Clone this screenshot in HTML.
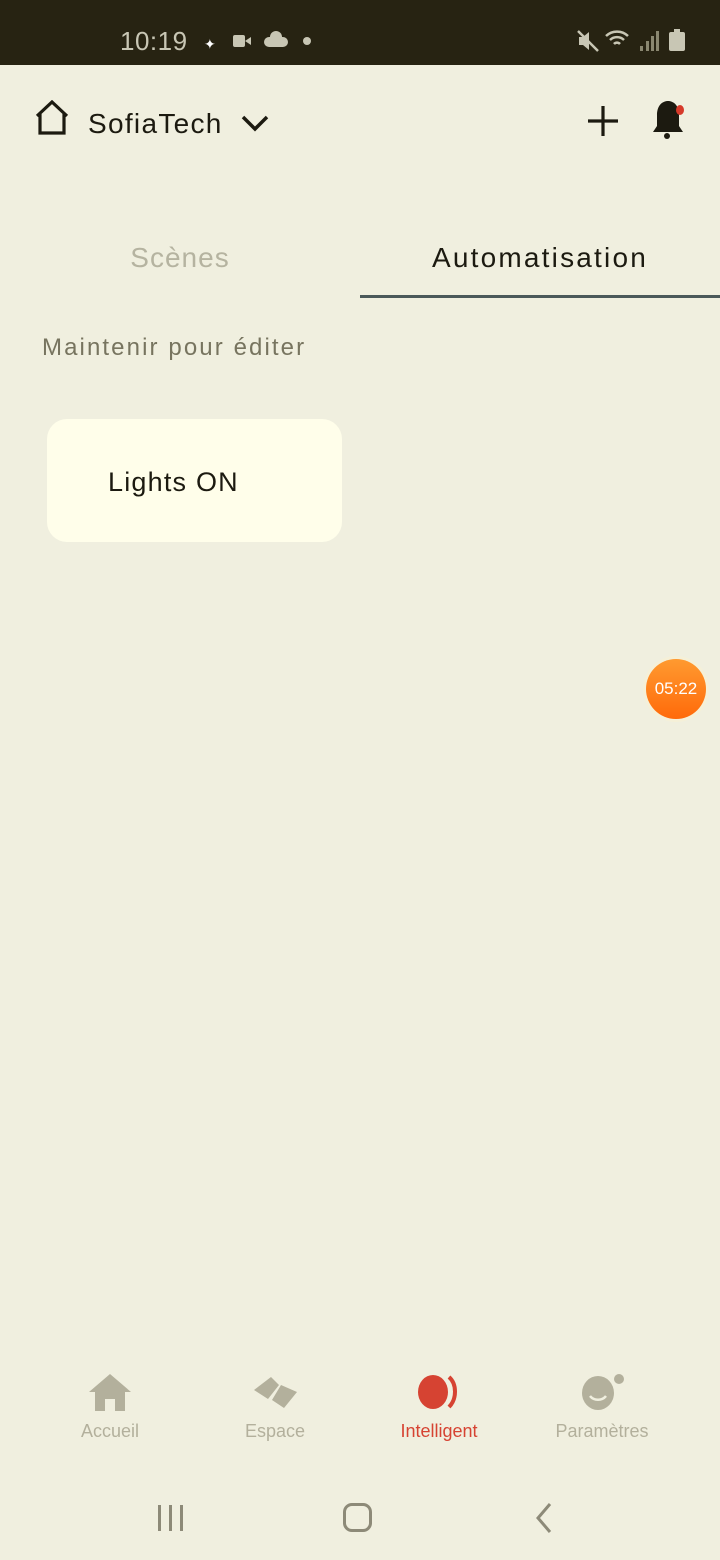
<!DOCTYPE html>
<html><head><meta charset="utf-8"><style>
*{margin:0;padding:0;box-sizing:border-box}
body{width:720px;height:1560px;background:#f0efdf;font-family:"Liberation Sans","DejaVu Sans",sans-serif;position:relative;overflow:hidden;color:#1c1a10}
.abs{position:absolute}
.sb{top:0;left:0;width:720px;height:65px;background:#272312;color:#c8c6b4}
.time{left:120px;top:26px;font-size:26px;letter-spacing:0.5px}
.t{font-size:28px;white-space:nowrap}
.nav{font-size:18px;color:#b3b09c;text-align:center;width:140px}
</style></head><body>
<div class="abs sb">
  <div class="abs time">10:19</div>
  <div class="abs" style="left:204px;top:36px;font-size:14px;color:#fff">✦</div>
  <div class="abs" style="left:233px;top:35px;width:12px;height:12px;background:#c8c6b4;border-radius:2px"></div>
  <div class="abs" style="left:245px;top:37px;width:0;height:0;border-top:4px solid transparent;border-bottom:4px solid transparent;border-right:6px solid #c8c6b4"></div>
  <div class="abs" style="left:264px;top:37px;width:24px;height:10px;background:#c8c6b4;border-radius:6px"></div>
  <div class="abs" style="left:270px;top:31px;width:12px;height:12px;background:#c8c6b4;border-radius:50%"></div>
  <div class="abs" style="left:303px;top:37px;width:8px;height:8px;background:#c8c6b4;border-radius:50%"></div>
  <svg class="abs" style="left:575px;top:28px" width="26" height="26" viewBox="0 0 26 26"><path d="M4 9h4l6-5v18l-6-5H4z" fill="#c8c6b4"/><path d="M3 3l20 20" stroke="#c8c6b4" stroke-width="2.5"/></svg>
  <svg class="abs" style="left:604px;top:28px" width="30" height="24" viewBox="0 0 30 24"><path d="M2 8a16 16 0 0 1 22 0M6 12a10 10 0 0 1 14 0M10 16a4 4 0 0 1 6 0" stroke="#c8c6b4" stroke-width="2.5" fill="none"/></svg>
  <div class="abs" style="left:640px;top:46px;width:3px;height:5px;background:#8a8770"></div>
  <div class="abs" style="left:646px;top:41px;width:3px;height:10px;background:#8a8770"></div>
  <div class="abs" style="left:651px;top:36px;width:3px;height:15px;background:#8a8770"></div>
  <div class="abs" style="left:656px;top:31px;width:3px;height:20px;background:#8a8770"></div>
  <div class="abs" style="left:669px;top:32px;width:16px;height:19px;background:#c8c6b4;border-radius:2px"></div>
  <div class="abs" style="left:674px;top:29px;width:6px;height:4px;background:#c8c6b4"></div>
</div>
<svg class="abs" style="left:34px;top:100px" width="38" height="36" viewBox="0 0 38 36"><path d="M3 16L18 2l15 14M6 14v19h24V14" stroke="#1c1a10" stroke-width="3.2" fill="none"/></svg>
<div class="abs t" style="left:88px;top:108px;letter-spacing:1.3px">SofiaTech</div>
<svg class="abs" style="left:240px;top:114px" width="30" height="20" viewBox="0 0 30 20"><path d="M3 3l12 12L27 3" stroke="#1c1a10" stroke-width="3.5" fill="none"/></svg>
<svg class="abs" style="left:586px;top:104px" width="34" height="34" viewBox="0 0 34 34"><path d="M17 2v30M2 17h30" stroke="#1c1a10" stroke-width="3.2"/></svg>
<svg class="abs" style="left:648px;top:98px" width="40" height="44" viewBox="0 0 40 44"><path d="M19 3c-7 1-10 7-10 14v11l-4 6h30l-4-6V17c0-7-3-13-10-14z" fill="#1c1a10"/><circle cx="19" cy="38" r="3" fill="#1c1a10"/><ellipse cx="32" cy="12" rx="4" ry="5" fill="#d63a2a"/></svg>
<div class="abs" style="left:0;top:242px;width:360px;text-align:center;font-size:28px;color:#b5b3a0;letter-spacing:1px">Scènes</div>
<div class="abs" style="left:360px;top:242px;width:360px;text-align:center;font-size:28px;letter-spacing:2.2px">Automatisation</div>
<div class="abs" style="left:360px;top:295px;width:360px;height:3px;background:#4b5959"></div>
<div class="abs" style="left:42px;top:334px;font-size:24px;color:#77745f;letter-spacing:2.1px;white-space:nowrap">Maintenir pour éditer</div>
<div class="abs" style="left:47px;top:419px;width:295px;height:123px;background:#fffeea;border-radius:20px"></div>
<div class="abs" style="left:108px;top:467px;font-size:27px;letter-spacing:1.2px">Lights ON</div>
<div class="abs" style="left:643px;top:656px;width:66px;height:66px;border-radius:50%;background:#f5f0d8"></div>
<div class="abs" style="left:646px;top:659px;width:60px;height:60px;border-radius:50%;background:linear-gradient(#ff9a30,#ff6a0a);color:#fff;font-size:17px;text-align:center;line-height:60px">05:22</div>
<svg class="abs" style="left:88px;top:1373px" width="44" height="40" viewBox="0 0 44 40"><path d="M22 1L1 19h6v19h10V26h10v12h10V19h6z" fill="#b3b09c"/></svg>
<svg class="abs" style="left:252px;top:1376px" width="46" height="34" viewBox="0 0 46 34"><path d="M2 14L19 1l8 8-11 14z" fill="#b3b09c"/><path d="M29 9l16 7-13 16-12-8z" fill="#b3b09c"/></svg>
<svg class="abs" style="left:416px;top:1374px" width="46" height="36" viewBox="0 0 46 36"><ellipse cx="17" cy="18" rx="15" ry="17" fill="#d64332"/><path d="M33 3c8 7 8 22 0 30" stroke="#d64332" stroke-width="4" fill="none"/></svg>
<svg class="abs" style="left:578px;top:1372px" width="50" height="40" viewBox="0 0 50 40"><ellipse cx="20" cy="21" rx="16" ry="17" fill="#b3b09c"/><path d="M12 24c4 5 12 5 16 0" stroke="#f0efdf" stroke-width="2.5" fill="none"/><circle cx="41" cy="7" r="5" fill="#b3b09c"/></svg>
<div class="abs nav" style="left:40px;top:1421px">Accueil</div>
<div class="abs nav" style="left:205px;top:1421px">Espace</div>
<div class="abs nav" style="left:369px;top:1421px;color:#d64332">Intelligent</div>
<div class="abs nav" style="left:532px;top:1421px">Paramètres</div>
<div class="abs" style="left:158px;top:1505px;width:3px;height:26px;background:#8d8a78"></div>
<div class="abs" style="left:169px;top:1505px;width:3px;height:26px;background:#8d8a78"></div>
<div class="abs" style="left:180px;top:1505px;width:3px;height:26px;background:#8d8a78"></div>
<div class="abs" style="left:343px;top:1503px;width:29px;height:29px;border:3px solid #8d8a78;border-radius:9px"></div>
<svg class="abs" style="left:534px;top:1502px" width="20" height="32" viewBox="0 0 20 32"><path d="M16 2L4 16l12 14" stroke="#8d8a78" stroke-width="3" fill="none"/></svg>
</body></html>
